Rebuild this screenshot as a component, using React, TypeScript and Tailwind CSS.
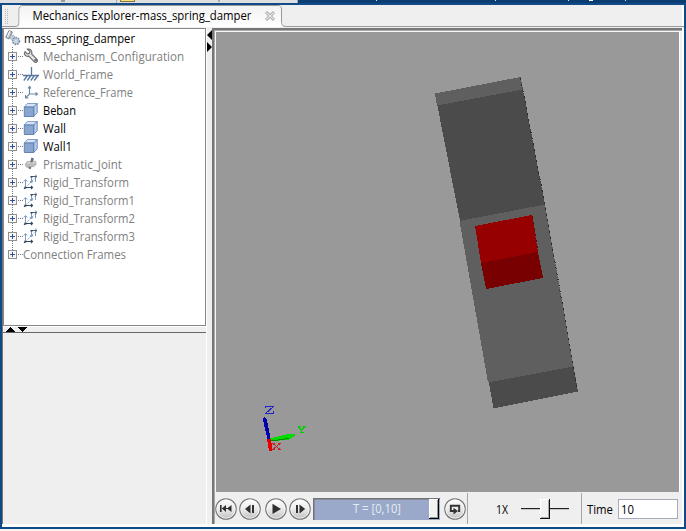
import React from "react";

type Kind = "wrench" | "world" | "frame" | "cube" | "joint" | "transform" | "none";

const nodes: { label: string; kind: Kind; active?: boolean; w: number }[] = [
  { label: "Mechanism_Configuration", kind: "wrench", w: 141 },
  { label: "World_Frame", kind: "world", w: 70 },
  { label: "Reference_Frame", kind: "frame", w: 90 },
  { label: "Beban", kind: "cube", active: true, w: 33 },
  { label: "Wall", kind: "cube", active: true, w: 23 },
  { label: "Wall1", kind: "cube", active: true, w: 29 },
  { label: "Prismatic_Joint", kind: "joint", w: 79 },
  { label: "Rigid_Transform", kind: "transform", w: 86 },
  { label: "Rigid_Transform1", kind: "transform", w: 92 },
  { label: "Rigid_Transform2", kind: "transform", w: 92 },
  { label: "Rigid_Transform3", kind: "transform", w: 92 },
  { label: "Connection Frames", kind: "none", w: 103 },
];

/* Label whose glyph run is fitted to a given width */
function Label({ text, w, color = "#000", y = 13 }: { text: string; w: number; color?: string; y?: number }) {
  return (
    <svg width={w + 2} height={18} className="block shrink-0 overflow-visible">
      <text x="0" y={y} fill={color} fontSize="12" textLength={w} lengthAdjust="spacingAndGlyphs" fontFamily="'Open Sans','Noto Sans',sans-serif">
        {text}
      </text>
    </svg>
  );
}

function NodeIcon({ kind }: { kind: Kind }) {
  if (kind === "none") return null;
  return (
    <svg width="16" height="18" viewBox="0 0 16 18" className="block shrink-0">
      {kind === "wrench" && (
        <path d="M4.5 2.2 L7 4.6 L6.3 6.4 L4.5 6.9 L2 4.7 C.4 7.2 2.6 10 5.8 9.2 L11 14.6 C12.8 16.6 15.6 14.3 13.8 12.1 L8.7 7 C9.5 3.6 7.4 1.5 4.5 2.2Z M11.9 12.5h1.1v1.1h-1.1z" fill="#e4e4e4" stroke="#707070" strokeWidth="1.2" />
      )}
      {kind === "world" && (
        <path d="M8.5 2V10 M0 10.5H16 M4.5 10.5L.8 15.5 M8 10.5L4.3 15.5 M11.5 10.5L7.8 15.5 M15 10.5L11.3 15.5" fill="none" stroke="#56789f" strokeWidth="1.3" />
      )}
      {kind === "frame" && (
        <path d="M6.5 4V11L3 14.5 M6.5 11H14 M5 5.5L6.5 3.5L8 5.5 M12.5 9.5L14.5 11L12.5 12.5 M2.5 12V15H5.5" fill="none" stroke="#6d87a6" strokeWidth="1.1" />
      )}
      {kind === "cube" && (
        <g strokeLinejoin="round">
          <path d="M1.3 6L4.3 2.5H14.2L10.7 6Z" fill="#d6e4fa" stroke="#7b97c2" strokeWidth=".9" />
          <path d="M10.7 6L14.2 2.5V11.8L10.7 15.5Z" fill="#b7ceef" stroke="#6683b0" strokeWidth=".9" />
          <path d="M1.3 6H10.7V15.5H1.3Z" fill="#89a6d0" stroke="#5b7aab" strokeWidth=".9" />
        </g>
      )}
      {kind === "joint" && (
        <g>
          <path d="M8.5 2.5L10.8 3.6L7.6 14.2L5.2 13.2Z" fill="#5d6b75" />
          <path d="M2.2 9.4L4.2 6.6L12.6 6.2L13.2 9.4L11 11.6L3.4 12.2Z" fill="#bcbcbc" stroke="#999" strokeWidth=".6" />
          <path d="M4.2 8L12 7.5" stroke="#e2e2e2" strokeWidth="1.1" />
          <path d="M9.6 3.2L8.4 7.4" stroke="#66737d" strokeWidth="1.8" />
        </g>
      )}
      {kind === "transform" && (
        <g fill="none">
          <path d="M4.5 12.5L11.5 5.5" stroke="#8fabd0" strokeDasharray="2 1" />
          <path d="M2.5 7V13 M.8 8.5L2.5 6.5L4.2 8.5" stroke="#7d9cc4" />
          <path d="M2 14.5H9 M8 13L9.5 14.5L8 16 M1 15.8L2.5 14.3" stroke="#33475e" strokeWidth="1.1" />
          <path d="M8.5 4V9.5 M7 8L8.5 10L10 8 M12.5 4V9" stroke="#7d9cc4" />
          <path d="M8 3.5H13.5 M12.3 2L14 3.5L12.3 5" stroke="#48617f" />
          <path d="M1.5 13.5h2v2h-2z M7.5 3h2v1.5h-2z" fill="#2f4257" />
        </g>
      )}
    </svg>
  );
}

function Tree() {
  return (
    <div className="h-[298px] w-[203px] border border-[#85868c] bg-white">
      <div className="flex h-[18px] items-center pl-px">
        <svg width="19" height="18" viewBox="0 0 19 18" className="block shrink-0">
          <path d="M4 1.5L7.3 3L4 10L.7 8.3Z" fill="#b9c3cc" stroke="#687783" strokeWidth=".9" />
          <path d="M5 2L2.4 8" stroke="#f5f7f9" strokeWidth="1.1" />
          <circle cx="7.3" cy="8.3" r="2.3" fill="#c6d0da" stroke="#7b8b9c" strokeDasharray="1 1" />
          <circle cx="11" cy="12" r="3.4" fill="#c9d6e4" stroke="#7890ab" strokeWidth="1.7" strokeDasharray="1.6 .9" />
          <circle cx="11" cy="12" r="1.2" fill="#fff" stroke="#98a6b5" strokeWidth=".5" />
        </svg>
        <Label text="mass_spring_damper" w={111} y={14} />
      </div>
      {nodes.map((n, i) => (
        <div key={n.label} className="flex h-[18px]">
          <svg width="19" height="18" className="block shrink-0" shapeRendering="crispEdges">
            <path d={i === nodes.length - 1 ? "M8.5 0V6" : "M8.5 0V18"} stroke="#777" strokeDasharray="1 1" />
            <path d="M14 9.5H19" stroke="#777" strokeDasharray="1 1" />
            <rect x="4.5" y="5.5" width="8" height="8" rx="1" fill="#f7f7f7" stroke="#919191" />
            <path d="M6 9.5H11 M8.5 7V12" stroke="#32509a" />
          </svg>
          <NodeIcon kind={n.kind} />
          <div className={n.kind === "none" ? "" : "pl-[4px]"}>
            <Label text={n.label} w={n.w} color={n.active ? "#000" : "#808080"} y={14} />
          </div>
        </div>
      ))}
    </div>
  );
}

function Scene() {
  return (
    <svg width="463" height="460" viewBox="216 32 463 460" className="block bg-[#999999]" shapeRendering="crispEdges">
      <path d="M216 31.5H679" stroke="#929292" />
      <path d="M435 93.5L520.5 77L545 205L578 391.5L493.5 408.5L460 221Z" fill="#4b4b4b" />
      <path d="M435 93.5L520.5 77L522.5 89.5L437 105.5Z M459.5 221L545 204.5L573.5 366.5L488 382.5Z" fill="#5f5f5f" />
      <path d="M520.5 78L545 205L577.5 391" stroke="#292929" strokeDasharray="2 4" fill="none" />
      <path d="M475 226L532 215L538 252L481 263Z" fill="#960000" />
      <path d="M481 263L538 252L543 278L486 289Z" fill="#780000" />
      <path d="M532 216L538 252" stroke="#4c1010" strokeDasharray="2 4" />
      <path d="M263 420L264 416L267 420L271 440L268 442Z" fill="#0000bd" />
      <path d="M266 421L270 440" stroke="#000080" />
      <path d="M270 438.5L288 434L295 434.5V436L289 439.5L271 441.5Z" fill="#00dc00" />
      <path d="M271 441L289 438.5" stroke="#008700" />
      <path d="M267 439H271L272.5 451H269Z" fill="#e40000" />
      <g fill="none" strokeWidth="1">
        <path d="M265.5 408V406.5H273.5L265.5 413.5H273.5V411" stroke="#2020c8" />
        <path d="M297.5 426.5H300.5 M302.5 426.5H306 M298.5 427L301.5 430V432.5 M304.5 427L301.5 430 M299.5 432.5H304" stroke="#00d000" />
        <path d="M272 443.5H275 M278 443.5H281 M273.5 444L279.5 449 M279.5 444L273.5 449 M272 449.5H275 M278 449.5H281" stroke="#c92222" />
      </g>
    </svg>
  );
}

type Action = "first" | "back" | "play" | "forward" | "loop";
function RoundButton({ action }: { action: Action }) {
  return (
    <svg width="22" height="22" viewBox="0 0 22 22" className="block shrink-0">
      <defs>
        <linearGradient id={"face-" + action} x2="0" y2="1">
          <stop stopColor="#fff" />
          <stop offset=".55" stopColor="#e8e8e8" />
          <stop offset="1" stopColor="#bdbdbd" />
        </linearGradient>
      </defs>
      <circle cx="11" cy="11" r="10.2" fill={"url(#face-" + action + ")"} stroke="#777" strokeWidth="1.2" />
      <circle cx="11" cy="11" r="9.2" fill="none" stroke="#fff" strokeWidth=".7" />
      <g fill="#303030">
        {action === "first" && <path d="M5 7h1.6v7H5z M11 7v7l-4.2-3.5z M16.5 7v7L12 10.5z M11 10h2v1h-2z" />}
        {action === "back" && <path d="M11.5 6.5v9L6 11z M13 7h2v8h-2z" />}
        {action === "play" && <path d="M7.5 5.8V16L16 10.9z" />}
        {action === "forward" && <path d="M7 7h2v8H7z M10.5 6.5v9l5.7-4.5z" />}
      </g>
      {action === "loop" && (
        <g>
          <path d="M10 13H6.8V7.8H15.2V13H14" fill="none" stroke="#333" strokeWidth="1.9" />
          <path d="M9.5 9.8L14 13L9.5 16.4Z" fill="#333" />
        </g>
      )}
    </svg>
  );
}

function Toolbar() {
  return (
    <div className="-ml-px flex h-[31px] items-center bg-[#efefef] pt-[2px]">
      <RoundButton action="first" />
      <div className="ml-[2px]"><RoundButton action="back" /></div>
      <div className="ml-[4px]"><RoundButton action="play" /></div>
      <div className="ml-[2px]"><RoundButton action="forward" /></div>
      <div className="ml-[2px] flex h-[22px] w-[127px] border-t border-l border-[#747474] bg-[#9aa8c9] shadow-[inset_1px_1px_0_#858b99]">
        <div className="flex w-[115px] justify-center pt-px pl-[12px]"><Label text="T = [0,10]" w={48} color="#e2edf3" /></div>
        <div className="h-[20px] w-[10px] border-r border-b border-black bg-[#f2f2f2] shadow-[inset_1px_1px_0_#fff,inset_-1px_-1px_0_#999]" />
      </div>
      <div className="ml-[4px]"><RoundButton action="loop" /></div>
      <div className="ml-px h-[31px] w-px bg-[#a6a6a6]" />
      <div className="ml-[28px] pt-px"><Label text="1X" w={12} y={14} /></div>
      <svg width="49" height="24" className="ml-[11px] block" shapeRendering="crispEdges">
        <path d="M0 11.5H48" stroke="#222" />
        <path d="M0 12.5H48" stroke="#c5c5c5" />
        <path d="M19 2H28V21H19Z" fill="#f2f2f2" />
        <path d="M19.5 21V2.5H28" fill="none" stroke="#fff" />
        <path d="M28.5 2V21.5H19" fill="none" stroke="#111" />
        <path d="M27.5 3V20.5H20" fill="none" stroke="#aaa" />
      </svg>
      <div className="ml-[11px] h-[31px] w-px bg-[#a6a6a6]" />
      <div className="ml-[5px] pt-px"><Label text="Time" w={26} y={14} /></div>
      <div className="ml-[3px] h-[20px] w-[60px] border border-[#a5aabd] bg-white pl-[2px] pt-px"><Label text="10" w={13} y={13} /></div>
    </div>
  );
}

export default function App() {
  return (
    <div className="h-[531px] w-[686px] overflow-hidden bg-[#f3f5f7]">
      <div className="flex h-[3px] bg-[#0c3d72]">
        <div className="flex h-[3px] w-[298px] border-r border-[#9eabb7] bg-[#dedfe1]">
          <div className="ml-[61px] h-[2px] w-[4px] bg-[#9b9b9b]" />
          <div className="ml-[51px] w-px bg-[#aaa]" />
          <div className="ml-[3px] h-[2px] w-[15px] border border-t-0 border-[#807438] bg-[#f5df80]" />
          <div className="ml-[83px] h-[2px] w-[2px] bg-[#aaa]" />
        </div>
        <div className="ml-[78px] size-[1px] bg-[#d7e2ea]" />
        <div className="ml-[118px] size-[1px] bg-[#d7e2ea]" />
        <div className="ml-[72px] size-[1px] bg-[#d7e2ea]" />
        <div className="ml-[20px] h-px w-[4px] bg-white" />
        <div className="ml-[32px] size-[1px] bg-[#d7e2ea]" />
      </div>
      <div className="h-[526px] border-2 border-[#104a87] bg-[#efefef]">
        <div className="h-[522px] border-r-2 border-b-[3px] border-r-white border-b-white">
          <svg width="682" height="23" viewBox="2 5 682 23" className="block">
            <defs>
              <linearGradient id="tab" x2="0" y2="1"><stop stopColor="#f3f3f3" /><stop offset="1" stopColor="#fff" /></linearGradient>
            </defs>
            <path d="M2 26.5H15Q19 26.5 19 22V10Q19 5.5 23 5.5H278Q281.5 5.5 281.5 10V22Q281.5 26.5 286 26.5H684" fill="none" stroke="#999" />
            <path d="M19 27Q19.5 25 19.5 22V10Q19.5 6 23 6H278Q281 6 281 10V22Q281 25 283 27Z" fill="url(#tab)" />
            <path d="M5.5 9V24 M7.5 9V24" stroke="#b8b8b8" strokeDasharray="1 1" />
            <text x="32.5" y="20" fontSize="12" fill="#000" textLength="219" lengthAdjust="spacingAndGlyphs" fontFamily="'Open Sans','Noto Sans',sans-serif">Mechanics Explorer-mass_spring_damper</text>
            <path d="M266 12L274 20M274 12L266 20" stroke="#a3a3a3" strokeWidth="3" />
            <path d="M266.3 12.3L273.7 19.7M273.7 12.3L266.3 19.7" stroke="#f0f0f0" strokeWidth="1.2" />
          </svg>
          <div className="flex h-[496px]">
            <div className="w-[204px] border-l border-[#777] bg-[#efefef]">
              <Tree />
              <div className="h-[7px] w-[203px] border-t border-b border-t-white border-b-[#65656b]">
                <svg width="30" height="5" className="block" shapeRendering="crispEdges"><path d="M3 5L7.5 0L12 5Z M14 0H24L19 5Z" /></svg>
              </div>
            </div>
            <div className="w-[6px] border-l border-white bg-[#efefef]">
              <svg width="5" height="24" className="block"><path d="M5 2V12L0 7Z M0 14V24L5 19Z" /></svg>
            </div>
            <div className="w-[472px] border-l-2 border-t-2 border-[#777]">
              <div className="h-[494px] border-l border-t border-[#aaa]">
                <div className="h-[493px] border-l border-t border-[#f7f7f7]">
                  <div className="flex"><Scene /><div className="h-[460px] w-[3px] border-l border-white" /></div>
                  <Toolbar />
                </div>
              </div>
            </div>
          </div>
        </div>
      </div>
      <div className="h-[2px] bg-[#f3f5f7]" />
    </div>
  );
}
